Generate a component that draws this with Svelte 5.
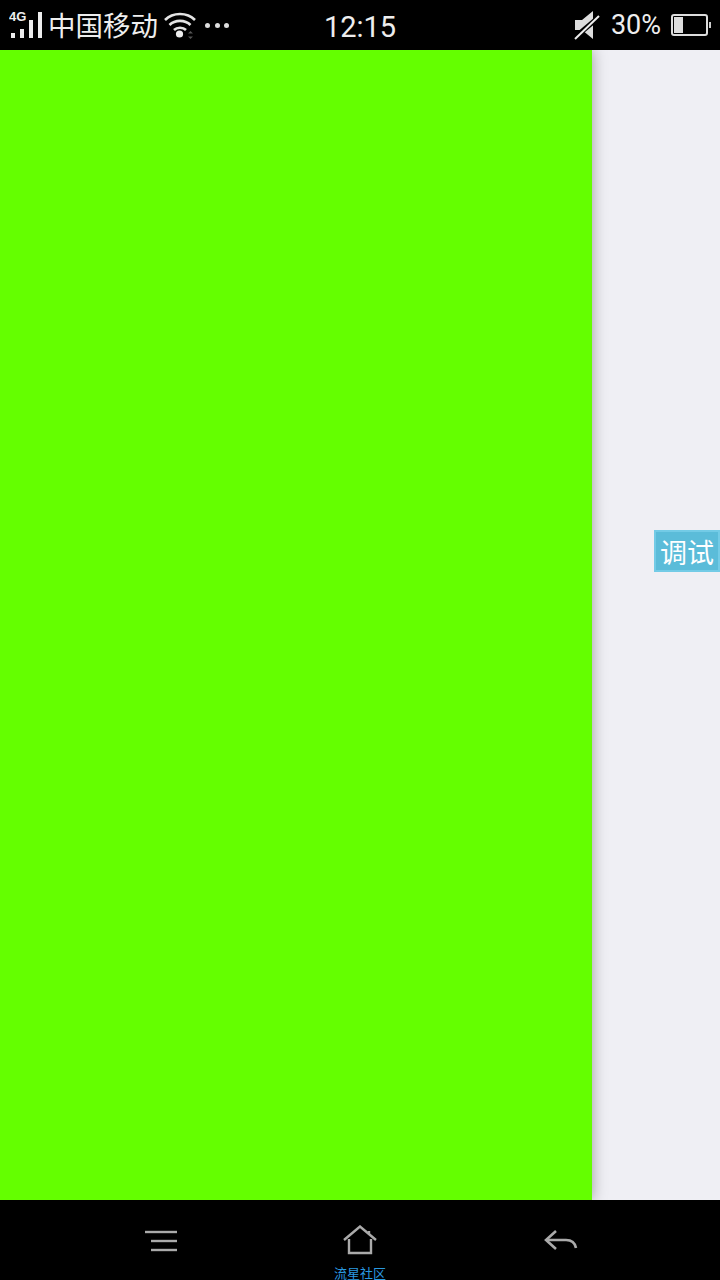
<script>
    const carrier = '中国移动';
    const time = '12:15';
    const battery = 30;
</script>

<div class="screen">
    <header class="status-bar">
        <div class="status-left">
            <svg class="signal" width="34" height="30" viewBox="0 0 34 30">
                <text x="0" y="11" class="net-type">4G</text>
                <rect x="2" y="23" width="4" height="5" fill="#eee" />
                <rect x="11" y="19" width="4" height="9" fill="#eee" />
                <rect x="20" y="10" width="4" height="18" fill="#eee" />
                <rect x="29" y="2" width="4" height="26" fill="#eee" />
            </svg>
            <span class="carrier">{carrier}</span>
            <svg class="wifi" width="32" height="28" viewBox="0 0 32 28" fill="none" stroke="#e4e4e4" stroke-width="2.6">
                <path d="M1 8 C9 0 23 0 31 8" />
                <path d="M5.5 13 C11 7.5 21 7.5 26.5 13" />
                <path d="M10 18 C13 15 19 15 22 18" />
                <circle cx="15.500" cy="22" r="3.600" fill="#eee" stroke="none" />
                <path d="M24 21.500 L26.500 19 L29 21.500 Z M24 24.500 L26.500 27 L29 24.500 Z" fill="#555" stroke="none" />
            </svg>
            <div class="dots">
                <i></i><i></i><i></i>
            </div>
        </div>
        <div class="clock">{time}</div>
        <div class="status-right">
            <svg class="mute" width="26" height="30" viewBox="0 0 26 30">
                <path d="M1 10 H8 L19 1 V29 L8 20 H1 Z" fill="#ddd" />
                <path d="M0 28 L25 7" stroke="#000" stroke-width="5" />
                <path d="M1 29 L25 6" stroke="#eee" stroke-width="2" />
            </svg>
            <span class="percent">{battery}%</span>
            <div class="battery">
                <div class="battery-body">
                    <div class="battery-level" style="width: {battery}%"></div>
                </div>
                <div class="battery-cap"></div>
            </div>
        </div>
    </header>

    <main class="content">
        <div class="panel"></div>
        <aside class="drawer"></aside>
        <button class="debug">调试</button>
    </main>

    <nav class="nav-bar">
        <button class="nav-item" aria-label="菜单">
            <svg width="34" height="24" viewBox="0 0 34 24" fill="none" stroke="#aaa" stroke-width="2.400">
                <path d="M1 3 H33" />
                <path d="M7 12 H33" />
                <path d="M7 21 H33" />
            </svg>
        </button>
        <button class="nav-item home">
            <svg width="34" height="30" viewBox="0 0 34 30" fill="none" stroke="#aaa" stroke-width="2.400">
                <path d="M1 15 L17 1.500 L33 15" />
                <path d="M26 6 V9" />
                <path d="M6 14 V28 H28 V14" />
            </svg>
            <span class="home-label">流星社区</span>
        </button>
        <button class="nav-item" aria-label="返回">
            <svg width="34" height="24" viewBox="0 0 34 24" fill="none" stroke="#aaa" stroke-width="2.600">
                <path d="M12 2 L2 11 L12 20" />
                <path d="M2 11 H22 C28 11 31 14 32 19" />
            </svg>
        </button>
    </nav>
</div>

<style>
    :global(body) {
        margin: 0;
        background: #000;
    }

    .screen {
        display: flex;
        flex-direction: column;
        width: 720px;
        height: 1280px;
        overflow: hidden;
        font-family: "Roboto", "Noto Sans CJK SC", sans-serif;
    }

    .status-bar {
        display: grid;
        grid-template-columns: 1fr auto 1fr;
        align-items: center;
        height: 50px;
        background: #000;
        color: #eee;
        flex: none;
    }

    .status-left {
        display: flex;
        align-items: center;
        padding-left: 9px;
    }

    .signal {
        margin-right: 5px;
        margin-top: -2px;
    }

    .carrier {
        padding-bottom: 4px;
        font-size: 27.500px;
        line-height: 46px;
        font-family: "Noto Sans CJK SC", sans-serif;
    }

    .net-type {
        font: bold 13px "Liberation Sans", sans-serif;
        fill: #eee;
    }

    .wifi {
        margin-left: 6px;
    }

    .dots {
        display: flex;
        gap: 4.500px;
        margin-left: 9px;
        margin-bottom: 2px;
    }

    .dots i {
        width: 5px;
        height: 5px;
        border-radius: 50%;
        background: #ddd;
    }

    .clock {
        font-size: 29px;
        line-height: 50px;
        padding-top: 2px;
    }

    .status-right {
        display: flex;
        align-items: center;
        justify-content: flex-end;
        padding-right: 9px;
        padding-bottom: 2px;
    }

    .mute {
        margin-right: 11px;
    }

    .percent {
        font-size: 27px;
        margin-right: 10px;
    }

    .battery {
        display: flex;
        align-items: center;
    }

    .battery-body {
        box-sizing: border-box;
        width: 37px;
        height: 22px;
        border: 2px solid #ddd;
        border-radius: 3px;
        padding: 1px;
    }

    .battery-level {
        height: 100%;
        background: #ddd;
    }

    .battery-cap {
        width: 2px;
        height: 6px;
        margin-left: 1px;
        background: #ccc;
    }

    .content {
        position: relative;
        display: flex;
        flex: 1;
    }

    .panel {
        position: relative;
        z-index: 1;
        width: 592px;
        background: #64ff00;
        box-shadow: 0 0 14px rgba(0, 0, 0, 0.35);
    }

    .drawer {
        flex: 1;
        background: #efeff4;
    }

    .debug {
        position: absolute;
        z-index: 2;
        top: 480px;
        right: 0;
        box-sizing: border-box;
        width: 66px;
        height: 42px;
        padding: 1px 0 0;
        border: 2px solid #73cbe6;
        background: #5bbcd9;
        color: #fff;
        font-family: "Noto Sans CJK SC", sans-serif;
        font-size: 27px;
        line-height: 38px;
    }

    .nav-bar {
        position: relative;
        z-index: 3;
        display: grid;
        grid-template-columns: repeat(3, 200px);
        justify-content: center;
        flex: none;
        height: 80px;
        background: #000;
    }

    .nav-item {
        display: flex;
        flex-direction: column;
        align-items: center;
        padding: 29px 0 0 1px;
        border: 0;
        background: none;
    }

    .nav-item.home {
        padding: 25px 0 0;
    }

    .home-label {
        margin-top: 10px;
        color: #2a9ae0;
        font-family: "Noto Sans CJK SC", sans-serif;
        font-size: 13px;
        line-height: 16px;
        white-space: nowrap;
    }
</style>
